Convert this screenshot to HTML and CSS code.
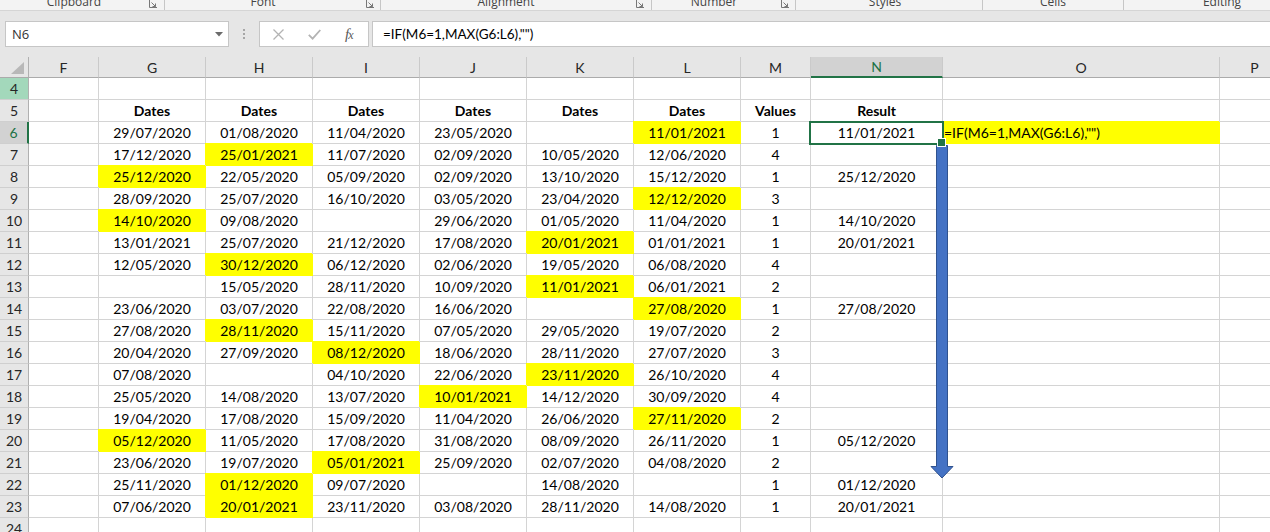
FILE: index.html
```html
<!DOCTYPE html>
<html>
<head>
<meta charset="utf-8">
<link rel="stylesheet" href="styles.css">
</head>
<body>
<div class="ribbon">
  <div class="ribbon-inner">
    <div class="group g1"><span class="glabel">Clipboard</span><svg class="launch" width="8" height="8" viewBox="0 0 8 8"><path d="M0.5 0V7.5H8M2.5 2.5L6.5 6.5M6.5 3.5V6.5H3.5" fill="none" stroke="#777" stroke-width="1"/></svg></div>
    <div class="group g2"><span class="glabel">Font</span><svg class="launch" width="8" height="8" viewBox="0 0 8 8"><path d="M0.5 0V7.5H8M2.5 2.5L6.5 6.5M6.5 3.5V6.5H3.5" fill="none" stroke="#777" stroke-width="1"/></svg></div>
    <div class="group g3"><span class="glabel">Alignment</span><svg class="launch" width="8" height="8" viewBox="0 0 8 8"><path d="M0.5 0V7.5H8M2.5 2.5L6.5 6.5M6.5 3.5V6.5H3.5" fill="none" stroke="#777" stroke-width="1"/></svg></div>
    <div class="group g4"><span class="glabel">Number</span><svg class="launch" width="8" height="8" viewBox="0 0 8 8"><path d="M0.5 0V7.5H8M2.5 2.5L6.5 6.5M6.5 3.5V6.5H3.5" fill="none" stroke="#777" stroke-width="1"/></svg></div>
    <div class="group g5"><span class="glabel">Styles</span></div>
    <div class="group g6"><span class="glabel">Cells</span></div>
    <div class="group g7"><span class="glabel">Editing</span></div>
  </div>
</div>

<div class="fbar">
  <div class="namebox"><span>N6</span><svg class="dd" width="8" height="5" viewBox="0 0 8 5"><path d="M0 0H8L4 4.5Z" fill="#6b6b6b"/></svg></div>
  <div class="grip"><i></i><i></i><i></i></div>
  <div class="fxbox">
    <svg class="ico-x" width="11" height="11" viewBox="0 0 11 11"><path d="M0.5 0.5L10.5 10.5M10.5 0.5L0.5 10.5" stroke="#b3b3b3" stroke-width="1.3" fill="none"/></svg>
    <svg class="ico-ok" width="13" height="11" viewBox="0 0 13 11"><path d="M0.8 5.8L4.6 9.6L12.3 1" stroke="#b3b3b3" stroke-width="1.8" fill="none"/></svg>
    <span class="fx">f<span class="fxx">x</span></span>
  </div>
  <div class="formula">=IF(M6=1,MAX(G6:L6),"")</div>
</div>

<div class="sheet">
  <div class="row hdr">
    <div class="ch corner"><svg width="14" height="13" viewBox="0 0 14 13"><path d="M13 0V12H0Z" fill="#b8b8b8"/></svg></div>
    <div class="ch">F</div><div class="ch">G</div><div class="ch">H</div><div class="ch">I</div><div class="ch">J</div><div class="ch">K</div><div class="ch">L</div><div class="ch">M</div><div class="ch sel">N</div><div class="ch">O</div><div class="ch">P</div>
  </div>

  <div class="row"><div class="rh hl">4</div><div class="c"></div><div class="c"></div><div class="c"></div><div class="c"></div><div class="c"></div><div class="c"></div><div class="c"></div><div class="c"></div><div class="c"></div><div class="c"></div><div class="c"></div></div>

  <div class="row"><div class="rh">5</div><div class="c"></div><div class="c b">Dates</div><div class="c b">Dates</div><div class="c b">Dates</div><div class="c b">Dates</div><div class="c b">Dates</div><div class="c b">Dates</div><div class="c b">Values</div><div class="c b">Result</div><div class="c"></div><div class="c"></div></div>

  <div class="row"><div class="rh sel">6</div><div class="c"></div><div class="c">29/07/2020</div><div class="c">01/08/2020</div><div class="c">11/04/2020</div><div class="c">23/05/2020</div><div class="c"></div><div class="c y">11/01/2021</div><div class="c">1</div><div class="c act">11/01/2021</div><div class="c y f">=IF(M6=1,MAX(G6:L6),"")</div><div class="c"></div></div>

  <div class="row"><div class="rh">7</div><div class="c"></div><div class="c">17/12/2020</div><div class="c y">25/01/2021</div><div class="c">11/07/2020</div><div class="c">02/09/2020</div><div class="c">10/05/2020</div><div class="c">12/06/2020</div><div class="c">4</div><div class="c"></div><div class="c"></div><div class="c"></div></div>

  <div class="row"><div class="rh">8</div><div class="c"></div><div class="c y">25/12/2020</div><div class="c">22/05/2020</div><div class="c">05/09/2020</div><div class="c">02/09/2020</div><div class="c">13/10/2020</div><div class="c">15/12/2020</div><div class="c">1</div><div class="c">25/12/2020</div><div class="c"></div><div class="c"></div></div>

  <div class="row"><div class="rh">9</div><div class="c"></div><div class="c">28/09/2020</div><div class="c">25/07/2020</div><div class="c">16/10/2020</div><div class="c">03/05/2020</div><div class="c">23/04/2020</div><div class="c y">12/12/2020</div><div class="c">3</div><div class="c"></div><div class="c"></div><div class="c"></div></div>

  <div class="row"><div class="rh">10</div><div class="c"></div><div class="c y">14/10/2020</div><div class="c">09/08/2020</div><div class="c"></div><div class="c">29/06/2020</div><div class="c">01/05/2020</div><div class="c">11/04/2020</div><div class="c">1</div><div class="c">14/10/2020</div><div class="c"></div><div class="c"></div></div>

  <div class="row"><div class="rh">11</div><div class="c"></div><div class="c">13/01/2021</div><div class="c">25/07/2020</div><div class="c">21/12/2020</div><div class="c">17/08/2020</div><div class="c y">20/01/2021</div><div class="c">01/01/2021</div><div class="c">1</div><div class="c">20/01/2021</div><div class="c"></div><div class="c"></div></div>

  <div class="row"><div class="rh">12</div><div class="c"></div><div class="c">12/05/2020</div><div class="c y">30/12/2020</div><div class="c">06/12/2020</div><div class="c">02/06/2020</div><div class="c">19/05/2020</div><div class="c">06/08/2020</div><div class="c">4</div><div class="c"></div><div class="c"></div><div class="c"></div></div>

  <div class="row"><div class="rh">13</div><div class="c"></div><div class="c"></div><div class="c">15/05/2020</div><div class="c">28/11/2020</div><div class="c">10/09/2020</div><div class="c y">11/01/2021</div><div class="c">06/01/2021</div><div class="c">2</div><div class="c"></div><div class="c"></div><div class="c"></div></div>

  <div class="row"><div class="rh">14</div><div class="c"></div><div class="c">23/06/2020</div><div class="c">03/07/2020</div><div class="c">22/08/2020</div><div class="c">16/06/2020</div><div class="c"></div><div class="c y">27/08/2020</div><div class="c">1</div><div class="c">27/08/2020</div><div class="c"></div><div class="c"></div></div>

  <div class="row"><div class="rh">15</div><div class="c"></div><div class="c">27/08/2020</div><div class="c y">28/11/2020</div><div class="c">15/11/2020</div><div class="c">07/05/2020</div><div class="c">29/05/2020</div><div class="c">19/07/2020</div><div class="c">2</div><div class="c"></div><div class="c"></div><div class="c"></div></div>

  <div class="row"><div class="rh">16</div><div class="c"></div><div class="c">20/04/2020</div><div class="c">27/09/2020</div><div class="c y">08/12/2020</div><div class="c">18/06/2020</div><div class="c">28/11/2020</div><div class="c">27/07/2020</div><div class="c">3</div><div class="c"></div><div class="c"></div><div class="c"></div></div>

  <div class="row"><div class="rh">17</div><div class="c"></div><div class="c">07/08/2020</div><div class="c"></div><div class="c">04/10/2020</div><div class="c">22/06/2020</div><div class="c y">23/11/2020</div><div class="c">26/10/2020</div><div class="c">4</div><div class="c"></div><div class="c"></div><div class="c"></div></div>

  <div class="row"><div class="rh">18</div><div class="c"></div><div class="c">25/05/2020</div><div class="c">14/08/2020</div><div class="c">13/07/2020</div><div class="c y">10/01/2021</div><div class="c">14/12/2020</div><div class="c">30/09/2020</div><div class="c">4</div><div class="c"></div><div class="c"></div><div class="c"></div></div>

  <div class="row"><div class="rh">19</div><div class="c"></div><div class="c">19/04/2020</div><div class="c">17/08/2020</div><div class="c">15/09/2020</div><div class="c">11/04/2020</div><div class="c">26/06/2020</div><div class="c y">27/11/2020</div><div class="c">2</div><div class="c"></div><div class="c"></div><div class="c"></div></div>

  <div class="row"><div class="rh">20</div><div class="c"></div><div class="c y">05/12/2020</div><div class="c">11/05/2020</div><div class="c">17/08/2020</div><div class="c">31/08/2020</div><div class="c">08/09/2020</div><div class="c">26/11/2020</div><div class="c">1</div><div class="c">05/12/2020</div><div class="c"></div><div class="c"></div></div>

  <div class="row"><div class="rh">21</div><div class="c"></div><div class="c">23/06/2020</div><div class="c">19/07/2020</div><div class="c y">05/01/2021</div><div class="c">25/09/2020</div><div class="c">02/07/2020</div><div class="c">04/08/2020</div><div class="c">2</div><div class="c"></div><div class="c"></div><div class="c"></div></div>

  <div class="row"><div class="rh">22</div><div class="c"></div><div class="c">25/11/2020</div><div class="c y">01/12/2020</div><div class="c">09/07/2020</div><div class="c"></div><div class="c">14/08/2020</div><div class="c"></div><div class="c">1</div><div class="c">01/12/2020</div><div class="c"></div><div class="c"></div></div>

  <div class="row"><div class="rh">23</div><div class="c"></div><div class="c">07/06/2020</div><div class="c y">20/01/2021</div><div class="c">23/11/2020</div><div class="c">03/08/2020</div><div class="c">28/11/2020</div><div class="c">14/08/2020</div><div class="c">1</div><div class="c">20/01/2021</div><div class="c"></div><div class="c"></div></div>

  <div class="row"><div class="rh">24</div><div class="c"></div><div class="c"></div><div class="c"></div><div class="c"></div><div class="c"></div><div class="c"></div><div class="c"></div><div class="c"></div><div class="c"></div><div class="c"></div><div class="c"></div></div>

  <svg class="arrow" width="24" height="334" viewBox="0 0 24 334"><path d="M6.5 0.5H17.5V321.5H23L12 333L1 321.5H6.5Z" fill="#4472c4" stroke="#2f528f" stroke-width="1"/></svg>
</div>
</body>
</html>
```

FILE: styles.css
```css
* { box-sizing: border-box; }
html, body { margin: 0; padding: 0; }
body {
  width: 1270px;
  height: 532px;
  overflow: hidden;
  background: #fff;
  font-family: Lato, "Liberation Sans", sans-serif;
}

/* ribbon group labels (cut off at the top) */
.ribbon {
  height: 11px;
  background: #f3f3f3;
  border-bottom: 1px solid #d5d5d5;
  overflow: hidden;
}
.ribbon-inner { display: flex; height: 10px; }
.group {
  flex: none;
  display: flex;
  align-items: flex-start;
  height: 10px;
  border-right: 1px solid #c6c6c6;
}
.glabel {
  flex: none;
  margin-top: -6px;
  height: 16px;
  line-height: 16px;
  font-family: "Open Sans", "Noto Sans", sans-serif;
  font-size: 12px;
  color: #444;
  text-align: center;
  white-space: nowrap;
}
.launch { flex: none; margin-left: auto; margin-top: 0; }
.g1 { width: 165px; } .g1 .glabel { width: 148px; } .g1 .launch { margin-right: 7px; }
.g2 { width: 216px; } .g2 .glabel { width: 196px; } .g2 .launch { margin-right: 6px; }
.g3 { width: 271px; } .g3 .glabel { width: 250px; } .g3 .launch { margin-right: 7px; }
.g4 { width: 144px; } .g4 .glabel { width: 124px; } .g4 .launch { margin-right: 6px; }
.g5 { width: 187px; } .g5 .glabel { width: 178px; }
.g6 { width: 141px; } .g6 .glabel { width: 140px; }
.g7 { width: 196px; border-right: none; } .g7 .glabel { width: 196px; }

/* formula bar */
.fbar {
  height: 46px;
  background: #e6e6e6;
  display: flex;
  align-items: flex-start;
  padding-top: 10px;
}
.namebox {
  flex: none;
  margin-left: 5px;
  width: 224px;
  height: 26px;
  background: #fff;
  border: 1px solid #c6c6c6;
  display: flex;
  align-items: center;
  padding: 0 6px;
  font-family: "Open Sans", "Noto Sans", sans-serif;
  font-size: 13px;
  color: #333;
}
.dd { margin-left: auto; margin-right: -1px; }
.grip {
  flex: none;
  margin-left: 14px;
  width: 2px;
  height: 26px;
  display: flex;
  flex-direction: column;
  justify-content: center;
  gap: 2px;
}
.grip i { display: block; width: 2px; height: 2px; background: #a6a6a6; }
.fxbox {
  flex: none;
  margin-left: 14px;
  width: 110px;
  height: 26px;
  background: #fff;
  border: 1px solid #c6c6c6;
  display: flex;
  align-items: center;
}
.ico-x { margin-left: 13px; }
.ico-ok { margin-left: 24px; }
.fx {
  margin-left: 24px;
  font-family: "Liberation Serif", "DejaVu Serif", serif;
  font-style: italic;
  font-size: 15px;
  color: #595959;
  letter-spacing: -1px;
}
.fxx { font-size: 12px; }
.formula {
  flex: 1;
  margin-left: 3px;
  height: 26px;
  background: #fff;
  border: 1px solid #c6c6c6;
  border-right: none;
  padding-left: 10px;
  font-size: 13.5px;
  line-height: 24px;
  color: #000;
  white-space: nowrap;
}

/* sheet grid */
.sheet { position: relative; }
.row {
  display: grid;
  grid-template-columns: 29px 70px repeat(6, 107px) 70px 132px 277px 70px;
  height: 22px;
}
.row.hdr { height: 21px; }
.ch, .rh, .c {
  display: flex;
  align-items: center;
  justify-content: center;
  white-space: nowrap;
  font-size: 14px;
}
.ch {
  background: #e6e6e6;
  border-right: 1px solid #cacaca;
  border-bottom: 1px solid #ababab;
  color: #262626;
}
.ch.corner {
  border-right: 1px solid #b0b0b0;
  justify-content: flex-end;
  align-items: flex-end;
  padding: 0 3px 2px 0;
}
.ch.sel {
  background: #d2d2d2;
  color: #217346;
  border-bottom: 2px solid #217346;
}
.rh {
  background: #e6e6e6;
  border-right: 1px solid #b0b0b0;
  border-bottom: 1px solid #cfcfcf;
  color: #262626;
}
.rh.hl { background: #a3d8bb; }
.rh.sel {
  background: #d2d2d2;
  color: #217346;
  border-right: 2px solid #217346;
}
.c {
  border-right: 1px solid #d4d4d4;
  border-bottom: 1px solid #d4d4d4;
  color: #000;
}
.c.b { font-weight: 700; }
.c.y {
  background: #ffff00;
  border-color: #ffff00;
  box-shadow: -1px -1px 0 0 #ffff00;
}
.c.f { justify-content: flex-start; padding-left: 1px; }
.c.act { position: relative; }
.c.act::after {
  content: "";
  position: absolute;
  left: -2px;
  right: -2px;
  top: -1px;
  bottom: -2px;
  border: 2px solid #217346;
}
.c.act::before {
  content: "";
  position: absolute;
  right: -4px;
  bottom: -4px;
  width: 7px;
  height: 7px;
  background: #217346;
  border: 1px solid #fff;
  z-index: 2;
}
.arrow { position: absolute; left: 930px; top: 88px; }
```
